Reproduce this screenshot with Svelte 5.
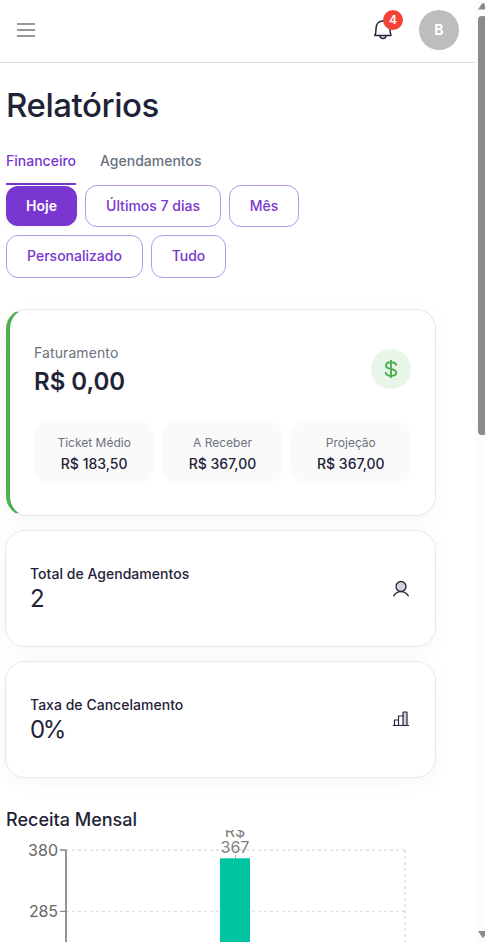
<script>
  const filters = [
    { label: 'Hoje', width: 71, active: true },
    { label: 'Últimos 7 dias', width: 136 },
    { label: 'Mês', width: 70 },
    { label: 'Personalizado', width: 137 },
    { label: 'Tudo', width: 75 }
  ];
  const details = [
    ['Ticket Médio', 'R$ 183,50'],
    ['A Receber', 'R$ 367,00'],
    ['Projeção', 'R$ 367,00']
  ];
</script>

<div class="shell">
  <div class="page">
    <header>
      <button class="menu" aria-label="Menu"><i></i><i></i><i></i></button>
      <div class="actions">
        <div class="bell">
          <svg width="20" height="22" viewBox="0 0 20 22" fill="none" stroke="#23263b" stroke-width="1.5" stroke-linecap="round" stroke-linejoin="round">
            <path d="M1.8 16.4C2.9 14.6 3 12 3 9.4C3 5 5.8 2 10 2S16.6 5 17 9.4C17.1 12 17.1 14.6 18 16.4Z" />
            <path d="M7 17.2C7.4 18.9 8.5 19.6 10 19.6S12.6 18.9 13 17.2" />
          </svg>
          <span class="badge">4</span>
        </div>
        <div class="avatar">B</div>
      </div>
    </header>
    <main>
      <h1>Relatórios</h1>
      <nav><span class="tab selected">Financeiro</span><span class="tab">Agendamentos</span></nav>
      <div class="filters">
        {#each filters as f}
          <button class="filter" class:active={f.active} style="width: {f.width}px">{f.label}</button>
        {/each}
      </div>
      <section class="card revenue">
        <div class="top">
          <div>
            <div class="label">Faturamento</div>
            <div class="amount">R$ 0,00</div>
          </div>
          <div class="coin">
            <svg width="20" height="20" viewBox="0 0 20 20" fill="none" stroke="#4caf50" stroke-width="1.9">
              <path d="M10 1V19M15.3 6.6C15 4.4 13 3.3 10 3.3C7 3.3 4.9 4.5 4.9 6.6C4.9 8.7 6.8 9.4 10 10C13.4 10.6 15.3 11.4 15.3 13.5C15.3 15.6 13.1 16.8 10 16.8C6.8 16.8 4.7 15.5 4.5 13" />
            </svg>
          </div>
        </div>
        <div class="details">
          {#each details as [name, value]}
            <div class="detail"><span>{name}</span><b>{value}</b></div>
          {/each}
        </div>
      </section>
      <section class="card stat">
        <div><div class="name">Total de Agendamentos</div><div class="value">2</div></div>
        <svg width="18" height="18" viewBox="0 0 18 18" fill="none" stroke="#23263b" stroke-width="1.3" stroke-linecap="round">
          <circle cx="9" cy="6.5" r="5" fill="#d3d4d8" />
          <path d="M1.7 15.9C3.2 13.2 5.7 11.7 9 11.7S14.8 13.2 16.3 15.9" />
        </svg>
      </section>
      <section class="card stat">
        <div><div class="name">Taxa de Cancelamento</div><div class="value percent">0%</div></div>
        <svg width="18" height="18" viewBox="0 0 18 18" fill="none" stroke="#23263b" stroke-width="1.2" stroke-linecap="round">
          <path d="M11 14.5V1.5Q11 1 11.5 1H14.5Q15 1 15 1.5V14.5" fill="#d3d4d8" />
          <path d="M2.5 14.5V9H6.5M6.5 14.5V5H11M1.3 14.5H16.7" />
        </svg>
      </section>
      <h2>Receita Mensal</h2>
      <svg class="chart" width="430" height="112" viewBox="0 0 430 112">
        <g stroke="#ccc" stroke-opacity="0.6" stroke-dasharray="3 3">
          <path d="M60 20H399" stroke-width="1.5" /><path d="M60 81.3H399" stroke-width="1.2" />
          <path d="M399 20V112" stroke-width="1.6" />
        </g>
        <path d="M60 20V112" stroke="#999" stroke-width="2" />
        <path d="M60 20V112" stroke="#888" stroke-width="1" stroke-dasharray="3 3" />
        <path d="M54 20H60M54 81.3H60" stroke="#888" stroke-width="1.3" />
        <g fill="#666" font-size="16">
          <text x="52" y="26" text-anchor="end" textLength="30">380</text>
          <text x="52" y="87" text-anchor="end" textLength="29">285</text>
        </g>
        <rect x="214" y="28.3" width="30" height="90" fill="#00c49f" />
        <path d="M229.5 25V28" stroke="#aaa" />
        <g fill="#808080" font-size="16" text-anchor="middle">
          <text x="229" y="7">R$</text>
          <text x="229" y="23">367</text>
        </g>
      </svg>
    </main>
  </div>
  <aside>
    <svg width="10" height="942" viewBox="0 0 10 942" fill="#8b8b8b">
      <path d="M3 9.5L7 3.5Q8 2.5 9 3.5L13 9.5Z" />
      <rect x="3" y="16" width="9" height="419" rx="4" />
      <path d="M3 931H13L9 937Q8 938.5 7 937Z" />
    </svg>
  </aside>
</div>

<style>
  :global(body) { margin: 0; background: #fff; overflow: hidden; }
  .shell { display: flex; width: 485px; height: 942px; overflow: hidden; font-family: Inter, sans-serif; color: #1f2337; }
  .page { width: 475px; height: 942px; overflow: hidden; }
  aside { width: 10px; background: #fcfcfc; }
  aside svg { display: block; }
  button { font: inherit; box-sizing: border-box; padding: 0; }
  header { box-sizing: border-box; height: 63px; border-bottom: 1px solid #dddde5; display: flex; justify-content: space-between; align-items: center; padding: 0 16px 3px 17px; }
  .menu { border: 0; background: none; display: flex; flex-direction: column; gap: 4px; width: 18px; }
  .menu i { height: 2px; background: #999; }
  .actions { display: flex; align-items: center; gap: 26px; }
  .bell { position: relative; width: 20px; height: 22px; }
  .bell svg { display: block; }
  .badge { position: absolute; left: 10px; top: -9px; width: 20px; height: 20px; border-radius: 50%; background: #f44336; color: #fff; font-size: 12px; font-weight: 600; line-height: 20px; text-align: center; }
  .avatar { width: 40px; height: 40px; border-radius: 50%; background: #bdbdbd; color: #fff; font-size: 14px; font-weight: 700; line-height: 40px; text-align: center; }
  main { padding: 0 39px 0 6px; }
  h1 { margin: 21px 0 0; font-size: 33px; line-height: 42px; font-weight: 500; letter-spacing: -0.45px; }
  nav { display: flex; gap: 24px; margin-top: 13px; height: 46px; }
  .tab { box-sizing: border-box; height: 46px; line-height: 44px; font-size: 14px; font-weight: 500; color: #66727f; white-space: nowrap; }
  .selected { color: #7936d0; border-bottom: 2px solid #7936d0; }
  .filters { display: flex; flex-wrap: wrap; gap: 8px; width: 310px; }
  .filter { height: 42px; padding-bottom: 2px; border: 1px solid #b99ae6; border-radius: 12px; background: #fff; color: #7936d0; font-size: 14px; font-weight: 500; white-space: nowrap; }
  .filter:nth-child(n+4) { height: 43px; }
  .filter.active { height: 40px; margin: 1px 0; border: 0; background: #7936d0; color: #fff; font-weight: 600; box-shadow: 0 2px 6px #0000000d; }
  .card { box-sizing: border-box; background: #fff; border: 1px solid #e8e8e8; border-radius: 20px; box-shadow: 0 4px 20px #0000000a; }
  .revenue { width: 430px; height: 207px; margin-top: 31px; border-left: 4px solid #4caf50; padding: 32px 24px 0; }
  .top { display: flex; justify-content: space-between; align-items: center; height: 54px; }
  .label { font-size: 14px; line-height: 22px; color: #6b7280; letter-spacing: 0.1px; }
  .amount { font-size: 24px; line-height: 32px; padding-top: 2px; margin-bottom: -2px; font-weight: 600; }
  .coin { width: 40px; height: 40px; border-radius: 50%; background: #e8f5e9; display: grid; place-items: center; }
  .details { display: flex; gap: 8px; margin-top: 25px; }
  .detail { flex: 1; height: 62px; border-radius: 16px; background: #fafafa; text-align: center; display: flex; flex-direction: column; box-sizing: border-box; padding-top: 12px; }
  .detail span { font-size: 12px; line-height: 20px; color: #6b7280; }
  .detail b { font-size: 14px; line-height: 22px; font-weight: 500; }
  .stat { width: 431px; height: 117px; margin: 14px 0 0 -1px; padding: 0 25px 2px 24px; display: flex; justify-content: space-between; align-items: center; }
  .stat svg { position: relative; top: 1px; }
  .name { font-size: 14px; line-height: 22px; font-weight: 500; letter-spacing: 0.03px; }
  .value { font-size: 24px; line-height: 27px; font-weight: 400; }
  .percent { letter-spacing: -2.4px; }
  h2 { margin: 29px 0 -2px; padding-top: 1px; font-size: 18px; line-height: 24px; height: 24px; font-weight: 500; }
  .chart { display: block; overflow: hidden; margin-top: -1px; }
</style>
